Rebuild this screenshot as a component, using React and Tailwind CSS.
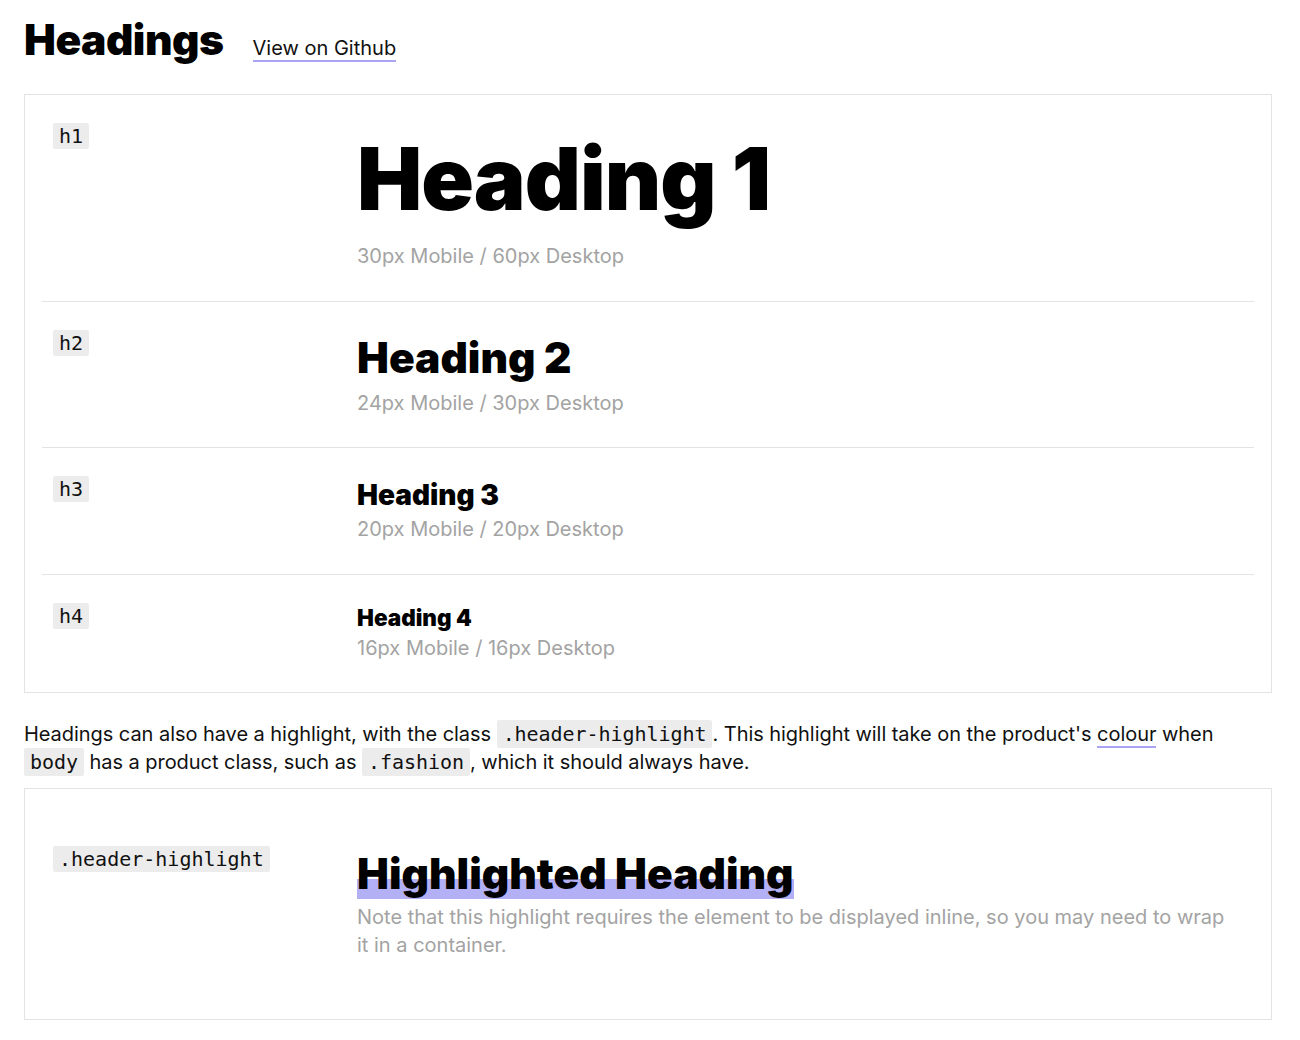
import React from "react";

const sans = { fontFamily: "Inter, 'Noto Sans', sans-serif" };

function Label({ children }) {
  return (
    <span className="inline-block bg-[#ececec] px-[6px] text-[20px] leading-[26px] text-[#111] rounded-[2px]" style={{ fontFamily: "'DejaVu Sans Mono', monospace" }}>
      {children}
    </span>
  );
}

function Code({ children }) {
  return (
    <code className="bg-[#ececec] px-[6px] py-[2px] text-[20px] text-[#111] rounded-[2px]" style={{ fontFamily: "'DejaVu Sans Mono', monospace" }}>
      {children}
    </code>
  );
}

function Row({ label, first, children, pb }) {
  return (
    <div className={`flex pt-[28px] ${first ? "" : "border-t border-[#e3e3e3]"} ${pb}`}>
      <div className="w-[315px] shrink-0 pl-[11px]">
        <Label>{label}</Label>
      </div>
      <div className="flex-1">{children}</div>
    </div>
  );
}

export default function App() {
  return (
    <div className="bg-white min-h-[1040px] pl-[24px] pr-[28px] pt-[16px] text-[#111]" style={sans}>
      <div className="flex items-baseline gap-[29px] h-[48px]">
        <h1 className="text-[42.5px] leading-[48px] font-black tracking-[-0.5px] text-black">Headings</h1>
        <a className="text-[20px] leading-[24px] border-b-2 border-[#a9a5f2] text-[#111]">View on Github</a>
      </div>

      <div className="mt-[30px] border border-[#e3e3e3] px-[17px]">
        <Row label="h1" first pb="pb-[31px]">
          <div className="text-[87px] leading-[112px] font-black tracking-[-1px] text-black">Heading 1</div>
          <div className="mt-[7px] text-[20px] leading-[28px] text-[#a3a3a3]">30px Mobile / 60px Desktop</div>
        </Row>
        <Row label="h2" pb="pb-[30px]">
          <div className="text-[42.5px] leading-[56px] font-black text-black">Heading 2</div>
          <div className="mt-[3px] text-[20px] leading-[28px] text-[#a3a3a3]">24px Mobile / 30px Desktop</div>
        </Row>
        <Row label="h3" pb="pb-[31px]">
          <div className="text-[28px] leading-[38px] font-black text-black">Heading 3</div>
          <div className="mt-[1px] text-[20px] leading-[28px] text-[#a3a3a3]">20px Mobile / 20px Desktop</div>
        </Row>
        <Row label="h4" pb="pb-[30px]">
          <div className="text-[22.5px] leading-[30px] font-black text-black">Heading 4</div>
          <div className="mt-[1px] text-[20px] leading-[28px] text-[#a3a3a3]">16px Mobile / 16px Desktop</div>
        </Row>
      </div>

      <p className="mt-[27px] text-[20px] leading-[28px] text-[#111] tracking-[-0.05px]">
        Headings can also have a highlight, with the class <Code>.header-highlight</Code>. This highlight will take on the product's{" "}
        <span className="border-b-2 border-[#a9a5f2]">colour</span> when <Code>body</Code> has a product class, such as{" "}
        <Code>.fashion</Code>, which it should always have.
      </p>

      <div className="mt-[12px] border border-[#e3e3e3] px-[17px] pt-[29px] pb-[32px]">
        <Row label=".header-highlight" first pb="pb-[28px]">
          <div className="text-[42.5px] leading-[55px] font-black text-black">
            <span className="bg-[linear-gradient(transparent_61%,#b3b0f6_61%)]">Highlighted Heading</span>
          </div>
          <div className="mt-[2px] pr-[20px] text-[20px] leading-[28px] text-[#a3a3a3]">
            Note that this highlight requires the element to be displayed inline, so you may need to wrap it in a container.
          </div>
        </Row>
      </div>
    </div>
  );
}
